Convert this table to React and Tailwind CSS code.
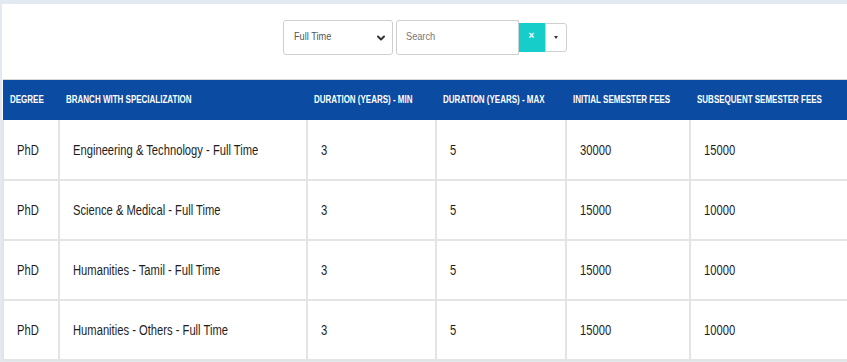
import { ChevronDown } from 'lucide-react';

const rows = [
  { degree: 'PhD', branch: 'Engineering & Technology - Full Time', min: '3', max: '5', initial: '30000', subsequent: '15000' },
  { degree: 'PhD', branch: 'Science & Medical - Full Time', min: '3', max: '5', initial: '15000', subsequent: '10000' },
  { degree: 'PhD', branch: 'Humanities - Tamil - Full Time', min: '3', max: '5', initial: '15000', subsequent: '10000' },
  { degree: 'PhD', branch: 'Humanities - Others - Full Time', min: '3', max: '5', initial: '15000', subsequent: '10000' },
];

const headers = [
  'Degree',
  'Branch with Specialization',
  'Duration (Years) - Min',
  'Duration (Years) - Max',
  'Initial Semester Fees',
  'Subsequent Semester Fees',
];

const colWidths = ['w-[56px]', 'w-[248px]', 'w-[129px]', 'w-[130px]', 'w-[124px]', 'w-[200px]'];

// the source font is a narrow sans; squeeze Liberation Sans to match its width
function Narrow({ children }) {
  return <span className="inline-block origin-left scale-x-[0.8] whitespace-nowrap">{children}</span>;
}

export default function App() {
  return (
    <div className="h-[362px] w-[847px] overflow-hidden bg-[#e3e9f1] pt-[4px] pl-[2px] font-['Liberation_Sans',sans-serif]">
      <div className="bg-white">
        {/* filter bar */}
        <div className="flex h-[75px] items-center justify-center pb-[9px]">
          <div className="relative flex h-[35px] w-[110px] items-center rounded-[3px] border border-[#cfcfcf] pl-[10px] text-[11.5px] text-[#555]">
            <Narrow>Full Time</Narrow>
            <ChevronDown size={12} strokeWidth={4} className="absolute right-[5px] top-[11px] text-[#333]" />
          </div>
          <div className="ml-[3px] flex h-[35px] w-[123px] items-center rounded-l-[3px] border border-[#cfcfcf] pl-[9px] text-[11.5px] text-[#777]">
            <Narrow>Search</Narrow>
          </div>
          <div className="flex h-[29px] w-[26px] items-center justify-center bg-[#16cdc9] pb-[4px] text-[10px] font-bold text-white">
            ×
          </div>
          <div className="flex h-[29px] w-[22px] items-center justify-center rounded-r-[3px] border border-[#cfcfcf]">
            <span className="h-0 w-0 border-x-[2px] border-t-[3px] border-x-transparent border-t-[#333]" />
          </div>
        </div>

        {/* table */}
        <table className="w-[887px] table-fixed border-collapse border-t border-[#d6d6d6]">
          <thead>
            <tr className="h-[40px] bg-[#0b4ba1] text-white">
              {headers.map((h, i) => (
                <th key={h} className={`${colWidths[i]} pl-[7px] text-left text-[10px] font-bold uppercase`}>
                  <Narrow>{h}</Narrow>
                </th>
              ))}
            </tr>
          </thead>
          <tbody className="text-[14px] text-[#1e1e1e]">
            {rows.map((r) => (
              <tr key={r.branch} className="h-[60px] border-b-2 border-[#e4e4e4]">
                {[r.degree, r.branch, r.min, r.max, r.initial, r.subsequent].map((c, i) => (
                  <td key={i} className="border-x-2 border-[#e4e4e4] px-[13px] pt-[2px]">
                    <Narrow>{c}</Narrow>
                  </td>
                ))}
              </tr>
            ))}
          </tbody>
        </table>
      </div>
    </div>
  );
}
